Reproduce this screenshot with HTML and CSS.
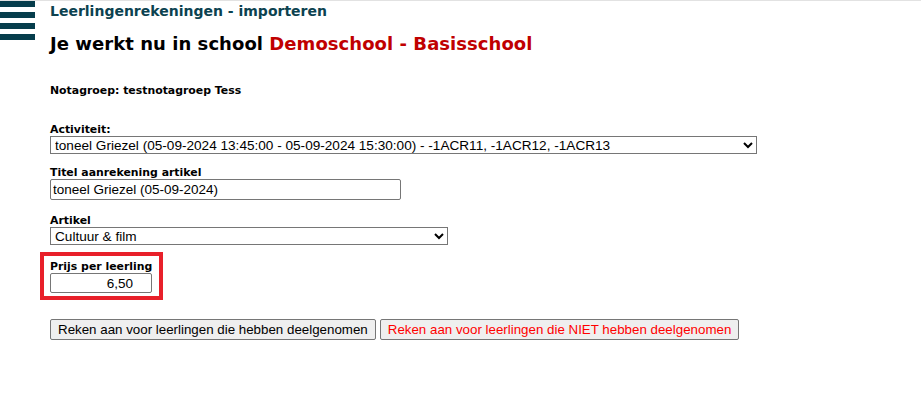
FILE: index.html
```html
<!DOCTYPE html>
<html>
<head>
<meta charset="utf-8">
<link rel="stylesheet" href="styles.css">
</head>
<body>
<div class="page">
  <div class="menu">
    <span class="bar"></span><span class="bar"></span><span class="bar"></span><span class="bar"></span>
  </div>
  <div class="main">
    <div class="apptitle">Leerlingenrekeningen - importeren</div>
    <h1 class="school">Je werkt nu in school <span class="red">Demoschool - Basisschool</span></h1>
    <div class="nota">Notagroep: testnotagroep Tess</div>
    <div class="field f-act">
      <label class="lbl">Activiteit:</label>
      <select class="sel sel-act"><option>toneel Griezel (05-09-2024 13:45:00 - 05-09-2024 15:30:00) - -1ACR11, -1ACR12, -1ACR13</option></select>
    </div>
    <div class="field f-tit">
      <label class="lbl">Titel aanrekening artikel</label>
      <input class="inp inp-tit" type="text" value="toneel Griezel (05-09-2024)">
    </div>
    <div class="field f-art">
      <label class="lbl">Artikel</label>
      <select class="sel sel-art"><option>Cultuur &amp; film</option></select>
    </div>
    <div class="pricebox">
      <label class="lbl">Prijs per leerling</label>
      <input class="inp inp-price" type="text" value="6,50">
    </div>
    <div class="buttons">
      <button class="btn">Reken aan voor leerlingen die hebben deelgenomen</button>
      <button class="btn btn-red">Reken aan voor leerlingen die NIET hebben deelgenomen</button>
    </div>
  </div>
</div>
</body>
</html>
```
FILE: styles.css
```css
html, body { margin: 0; padding: 0; background: #fff; }
body { font-family: "DejaVu Sans", Verdana, sans-serif; color: #000; }
.page { display: flex; border-top: 1px solid #e2e2e2; }
.menu { width: 35px; display: flex; flex-direction: column; gap: 5px; margin-right: 15px; }
.bar { display: block; height: 6px; background: #063d4c; }
.main { display: flex; flex-direction: column; align-items: flex-start; }
.apptitle { font-weight: bold; font-size: 14px; color: #0c4250; line-height: 18px; margin-top: 1px; }
.school { font-size: 18px; font-weight: bold; margin: 13px 0 0 0; line-height: 22px; letter-spacing: 0.05px; }
.red { color: #c00000; }
.nota { font-size: 10.9px; font-weight: bold; margin-top: 29px; line-height: 14px; }
.field { display: flex; flex-direction: column; align-items: flex-start; }
.lbl { font-size: 10.9px; font-weight: bold; line-height: 12px; }
.f-act { margin-top: 26px; }
.f-tit { margin-top: 13px; }
.f-art { margin-top: 15px; }
.sel { font-family: "Liberation Sans", Arial, sans-serif; font-size: 13.6px; height: 18px; padding: 0; border: 1px solid #767676; border-radius: 0; background: #fff; color: #000; }
.sel-act { width: 707px; }
.sel-art { width: 398px; }
.inp { font-family: "Liberation Sans", Arial, sans-serif; font-size: 13.5px; height: 21px; box-sizing: border-box; border: 1px solid #767676; border-radius: 2px; padding: 1px 2px; color: #000; }
.inp-tit { width: 351px; }
.inp-price { width: 102px; height: 20px; text-align: right; padding-right: 18px; }
.pricebox { margin-top: 7px; margin-left: -10px; border: 4px solid #e8202a; padding: 5px 7px 3px 6px; display: flex; flex-direction: column; align-items: flex-start; }
.buttons { margin-top: 19px; display: flex; gap: 4px; }
.btn { font-family: "Liberation Sans", Arial, sans-serif; font-size: 13.333px; height: 21px; padding: 1px 7px; border: 1px solid #767676; border-radius: 2px; background: #efefef; color: #000; }
.btn-red { color: #ff0000; }
```
